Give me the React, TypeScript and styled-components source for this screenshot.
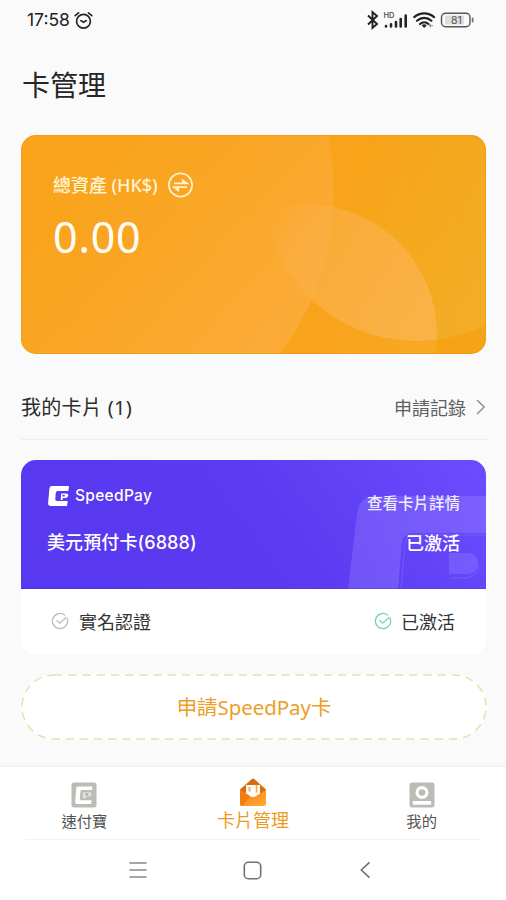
import React from "react";
import styled, { createGlobalStyle } from "styled-components";

const Global = createGlobalStyle`
  *, *::before, *::after { box-sizing: border-box; }
  body { margin: 0; background: #fafafa; }
`;

const cjk = `"Noto Sans CJK TC", sans-serif`;

const Screen = styled.div`
  width: 506px;
  height: 900px;
  display: flex;
  flex-direction: column;
  background: #fafafa;
  color: #2b2b2b;
  font-family: Inter, ${cjk};
  overflow: hidden;
  white-space: nowrap;
`;

const StatusBar = styled.header`
  height: 40px;
  padding: 0 31px 0 27px;
  display: flex;
  align-items: center;
  justify-content: space-between;
`;

const StatusGroup = styled.div<{ $gap: number }>`
  display: flex;
  align-items: center;
  gap: ${(p) => p.$gap}px;
`;

const Clock = styled.time`
  font: 400 17.5px/20px Inter, sans-serif;
  letter-spacing: 0;
  color: #222;
`;

const PageTitle = styled.h1`
  margin: 24px 0 0 22px;
  font: 400 28px/40px ${cjk};
  color: #262626;
`;

const AssetCard = styled.section`
  position: relative;
  margin: 31px 20px 0 21px;
  height: 219px;
  flex: none;
  padding: 37px 32px;
  border-radius: 15px;
  overflow: hidden;
  color: #fffdf5;
`;

const CardArt = styled.svg`
  position: absolute;
  inset: 0;
`;

const AssetHead = styled.div`
  position: relative;
  display: flex;
  align-items: center;
  gap: 9px;
  height: 26px;
`;

const AssetLabel = styled.span`
  font: 500 18px/26px "Noto Sans", ${cjk};
  letter-spacing: -0.05px;
  color: #fff3d4;
`;

const AssetValue = styled.div`
  position: relative;
  margin-top: 12px;
  font: 400 43px/54px "Noto Sans", sans-serif;
  letter-spacing: 0.8px;
`;

const SectionHead = styled.div`
  margin: 22px 18px 0 21px;
  height: 64px;
  flex: none;
  display: flex;
  align-items: center;
  justify-content: space-between;
  border-bottom: 1px solid #eeeeee;
`;

const SectionTitle = styled.h2`
  margin: 0;
  font: 400 20px/30px "Noto Sans", ${cjk};
  letter-spacing: 0.3px;
`;

const RecordsLink = styled.a`
  display: flex;
  align-items: center;
  gap: 9px;
  font: 400 18px/28px ${cjk};
  color: #606060;
  padding-bottom: 1px;
`;

const BankCard = styled.section`
  margin: 20px 20px 0 21px;
  height: 195px;
  flex: none;
  border-radius: 15px;
  overflow: hidden;
  background: #fff;
`;

const CardFace = styled.div`
  position: relative;
  height: 129px;
  padding: 22px 26px 0;
  display: flex;
  justify-content: space-between;
  color: #fff;
`;

const FaceColumn = styled.div<{ $end?: boolean }>`
  position: relative;
  display: flex;
  flex-direction: column;
  align-items: ${(p) => (p.$end ? "flex-end" : "flex-start")};
  padding-top: ${(p) => (p.$end ? 6 : 0)}px;
  gap: ${(p) => (p.$end ? 13 : 20)}px;
`;

const Brand = styled.div`
  height: 28px;
  display: flex;
  align-items: center;
  gap: 5px;
  font: 500 15.5px/28px Inter, sans-serif;
  letter-spacing: 0.3px;
`;

const CardName = styled.div`
  font: 500 18px/26px Inter, ${cjk};
  letter-spacing: 0.1px;
`;

const DetailLink = styled.a`
  font: 500 15.5px/28px ${cjk};
  color: #f0ecff;
`;

const CardState = styled.div`
  font: 500 18px/26px ${cjk};
`;

const CardChecks = styled.div`
  height: 65px;
  padding: 0 31px 0 30px;
  display: flex;
  align-items: center;
  justify-content: space-between;
`;

const Check = styled.div<{ $gap: number }>`
  display: flex;
  align-items: center;
  gap: ${(p) => p.$gap}px;
  font: 400 18px/26px ${cjk};
  color: #333;
  padding-bottom: 1px;
`;

const ApplyButton = styled.button`
  position: relative;
  margin: 19px 19px 0 21px;
  height: 66px;
  flex: none;
  padding: 0 0 1px;
  border: 0;
  border-radius: 33px;
  background: #fff;
  font: 400 20.4px/30px "Noto Sans", ${cjk};
  color: #eb9d27;
`;

const Outline = styled.svg`
  position: absolute;
  inset: 0;
`;

const Footer = styled.footer`
  margin-top: auto;
  height: 135px;
  flex: none;
  background: #fff;
  border-top: 2px solid #f3f3f3;
`;

const Tabs = styled.nav`
  height: 72px;
  display: grid;
  grid-template-columns: repeat(3, 1fr);
`;

const Tab = styled.div<{ $active?: boolean }>`
  display: flex;
  flex-direction: column;
  align-items: center;
  justify-content: flex-end;
  padding-bottom: ${(p) => (p.$active ? 7 : 8)}px;
  gap: ${(p) => (p.$active ? 0 : 1)}px;
  font: 400 ${(p) => (p.$active ? 18 : 15.3)}px/${(p) => (p.$active ? 25 : 22)}px ${cjk};
  color: ${(p) => (p.$active ? "#ee991e" : "#555")};
`;

const SystemNav = styled.div`
  margin: 0 26px;
  height: 61px;
  border-top: 1px solid #f3f3f3;
  padding: 0 108px 0 103px;
  display: grid;
  grid-template-columns: 113.5px 116px auto;
  align-items: center;
`;

const Alarm = () => (
  <svg width="19" height="19" viewBox="0 0 19 19" fill="none" stroke="#262626" strokeWidth="1.7" strokeLinecap="round">
    <circle cx="9.5" cy="10.2" r="6.9" />
    <path d="M1.2 4.6 4.6 1.8M17.8 4.6 14.4 1.8M6.9 9.6l2.6 1.7 2.7-1.7" />
  </svg>
);

const StatusIcons = () => (
  <svg width="110" height="24" viewBox="0 0 110 24" fill="none">
    <path d="m3 7.5 9 8.5-4.5 4V4L12 8l-9 8.5" stroke="#222" strokeWidth="1.9" />
    <text x="18.5" y="10" fontFamily="Inter, sans-serif" fontSize="7.5" fontWeight="600" fill="#555">HD</text>
    <g stroke="#252525" strokeWidth="2.6" strokeLinecap="round">
      <path d="M21 18.4v-.3M26 18.4v-2M31 18.4v-4.3M35.7 18.4V11M40.7 18.4V7.6" />
    </g>
    <g stroke="#222" strokeWidth="2.2" strokeLinecap="round">
      <path d="M49.2 9.1c5.6-5.1 14.3-5.1 19.9 0" />
      <path d="M52 12.7c4.1-3.8 10.3-3.8 14.4 0" />
      <path d="M55 16c2.5-2.2 6-2.2 8.5 0" />
    </g>
    <path d="m56.6 17.2 2.6 2.8 2.6-2.8q-2.6-1.8-5.2 0Z" fill="#222" />
    <path d="M64 17.7h4M65.3 16v3.5" stroke="#888" />
    <rect x="76.5" y="5.2" width="28.5" height="13.5" rx="4" stroke="#555" strokeWidth="1.4" />
    <rect x="80" y="7.4" width="19" height="9" rx="1.5" fill="#dedede" />
    <path d="M107.7 10.5v3" stroke="#777" strokeWidth="1.8" strokeLinecap="round" />
    <text x="91.3" y="15.8" textAnchor="middle" fontFamily="Inter, sans-serif" fontSize="10.5" fill="#555">81</text>
  </svg>
);

const AssetArt = () => (
  <CardArt width="465" height="219" viewBox="21 135 465 219">
    <defs>
      <linearGradient id="base" x1="0" y1="0" x2="1" y2="0">
        <stop offset="0" stopColor="#faa41c" />
        <stop offset=".65" stopColor="#f9a31a" />
        <stop offset="1" stopColor="#f4a414" />
      </linearGradient>
      <linearGradient id="left" gradientUnits="userSpaceOnUse" x1="90" y1="160" x2="270" y2="320">
        <stop offset="0" stopColor="#f9aa38" stopOpacity="0" />
        <stop offset="1" stopColor="#fbad3c" stopOpacity=".8" />
      </linearGradient>
      <linearGradient id="right" gradientUnits="userSpaceOnUse" x1="340" y1="200" x2="480" y2="280">
        <stop offset="0" stopColor="#f1b12a" stopOpacity="0" />
        <stop offset="1" stopColor="#f2ae2a" stopOpacity=".8" />
      </linearGradient>
      <linearGradient id="petal" gradientUnits="userSpaceOnUse" x1="275" y1="215" x2="430" y2="325">
        <stop offset="0" stopColor="#fcb75a" stopOpacity="0" />
        <stop offset=".3" stopColor="#fab045" stopOpacity=".65" />
        <stop offset="1" stopColor="#fab34a" stopOpacity=".9" />
      </linearGradient>
      <linearGradient id="petalEdge" gradientUnits="userSpaceOnUse" x1="300" y1="0" x2="437" y2="0">
        <stop offset="0" stopColor="#fcb13e" stopOpacity="0" />
        <stop offset="1" stopColor="#fcb13e" stopOpacity=".35" />
      </linearGradient>
      <clipPath id="rightCircle"><circle cx="417" cy="186" r="155" /></clipPath>
    </defs>
    <rect x="21" y="135" width="465" height="219" fill="url(#base)" />
    <circle cx="65" cy="192" r="269" fill="url(#left)" />
    <circle cx="417" cy="186" r="155" fill="url(#right)" />
    <circle cx="306" cy="335" r="131" fill="url(#petalEdge)" />
    <g clipPath="url(#rightCircle)"><circle cx="306" cy="335" r="131" fill="url(#petal)" /></g>
    <rect x="21.5" y="135.5" width="464" height="218" rx="14.5" fill="none" stroke="#f09b15" strokeOpacity=".75" />
  </CardArt>
);

const Exchange = () => (
  <svg width="27" height="26" viewBox="0 0 27 26" fill="none" stroke="#fff0ca" strokeWidth="1.8">
    <circle cx="13.5" cy="13" r="11.6" />
    <path d="M7 11.4h13L15 7.6M20 15.2H7l5 3.8" />
    <path d="m15 7 4.6 4.4H15ZM12 19.6l-4.6-4.4H12Z" fill="#fff0ca" stroke="none" />
  </svg>
);

const FaceArt = () => (
  <CardArt width="465" height="129" viewBox="21 460 465 129">
    <defs>
      <linearGradient id="violet" x1="0" y1="0.4" x2="1" y2="0.2">
        <stop offset="0" stopColor="#5838f0" />
        <stop offset=".5" stopColor="#5b3af1" />
        <stop offset="1" stopColor="#6a4bfd" />
      </linearGradient>
      <linearGradient id="mark" x1="0" y1="0" x2="1" y2="0">
        <stop offset="0" stopColor="#8b74fb" stopOpacity=".42" />
        <stop offset="1" stopColor="#8b74ff" stopOpacity=".52" />
      </linearGradient>
    </defs>
    <rect x="21" y="460" width="465" height="129" fill="url(#violet)" />
    <path d="M348 589 357 514q2-18 19-18H486V533H412q-9 0-10 10L398 589Z" fill="url(#mark)" />
    <path d="m401 589 4-46q1-8 9-8h72M451 578h14q13-1 14-14" fill="none" stroke="#8570ff" strokeOpacity=".4" strokeWidth="1.3" />
    <path d="M449 553h18q11 0 11 10 0 11-12 11H449Z" fill="#8270ff" fillOpacity=".5" />
    <path d="M21 588.5H486" stroke="#5133dc" strokeOpacity=".35" />
  </CardArt>
);

const BrandMark = () => (
  <svg width="23" height="22" viewBox="0 0 23 22">
    <path d="M5 1H22L21.4 6H10.8Q9 6 8.8 7.8L8.3 14.2Q8.2 16 10 16H20.7L20 21H4Q.9 21 1.1 18L2.4 3.4Q2.6 1 5 1Z" fill="#fff" />
    <path d="M14.2 8.4H19.4Q21.4 8.4 21.2 10.6 21 13 18.2 13H15.8L15.6 15H13.7Z" fill="#fff" />
    <rect x="15.4" y="9.7" width="2.4" height="1.9" rx=".7" fill="#5838f0" />
  </svg>
);

const Tick = ({ color }: { color: string }) => (
  <svg width="18" height="18" viewBox="0 0 18 18" fill="none" stroke={color} strokeWidth="1.3" strokeLinecap="round">
    <path d="M16.1 6.3A7.6 7.6 0 1 1 13.6 3" />
    <path d="m5.7 8.6 3 2.6 6.4-5.7" />
  </svg>
);

const PayTabIcon = () => (
  <svg width="26" height="26" viewBox="0 0 26 26">
    <rect x=".5" y=".5" width="25" height="25" rx="2.5" fill="#bcbbb5" />
    <path d="M7 4.5H21.4L21 8H11Q9.6 8 9.4 9.5L8.8 16.6Q8.7 18.2 10.2 18.2H20.6L20.2 22H6Q4 22 4.2 20L5.2 6.2Q5.3 4.5 7 4.5Z" fill="#fff" />
    <path d="M12 10.2H19Q20.8 10.2 20.6 12.2 20.4 14.5 18 14.5H15.4L15.2 16.3H11.6Z" fill="#fff" fillOpacity=".55" />
    <rect x="14.4" y="11.4" width="2.8" height="2" fill="#a5a49e" />
  </svg>
);

const CardsTabIcon = () => (
  <svg width="28" height="29" viewBox="0 0 28 29">
    <defs>
      <linearGradient id="fold" x1="0" y1="0" x2="1" y2="1">
        <stop offset="0" stopColor="#f77a0c" />
        <stop offset="1" stopColor="#ffad3a" />
      </linearGradient>
    </defs>
    <path d="M1 11.5 12.8 1q1.2-1 2.4 0L27 11.5V18H1Z" fill="#d96c12" />
    <path d="M7 7h14v12H7Z" fill="#fffdf8" />
    <path d="M9.5 9h2v4.5h-2zM16.8 7h1.6v7.5h-1.6z" fill="#f6ac50" />
    <path d="M1 11.5 11.7 18.4q2.3 1.4 4.6 0L27 11.5V26q0 2-2 2H3q-2 0-2-2Z" fill="url(#fold)" />
    <path d="M1 12v14q0 2 2 2L11 18.2Z" fill="#f47c10" />
  </svg>
);

const MeTabIcon = () => (
  <svg width="26" height="26" viewBox="0 0 26 26">
    <rect x=".5" y=".5" width="25" height="25" rx="2.5" fill="#bcbbb5" />
    <circle cx="13" cy="10.5" r="4.9" fill="none" stroke="#fff" strokeWidth="3.2" />
    <rect x="3.8" y="19" width="18.4" height="3.7" fill="#fff" />
  </svg>
);

export default function App() {
  return (
    <Screen>
      <Global />
      <StatusBar>
        <StatusGroup $gap={4}>
          <Clock>17:58</Clock>
          <Alarm />
        </StatusGroup>
        <StatusIcons />
      </StatusBar>
      <PageTitle>卡管理</PageTitle>
      <AssetCard>
        <AssetArt />
        <AssetHead>
          <AssetLabel>總資產 (HK$)</AssetLabel>
          <Exchange />
        </AssetHead>
        <AssetValue>0.00</AssetValue>
      </AssetCard>
      <SectionHead>
        <SectionTitle>我的卡片 (1)</SectionTitle>
        <RecordsLink>
          申請記錄
          <svg width="13" height="18" viewBox="0 0 13 18" fill="none" stroke="#888" strokeWidth="1.3">
            <path d="m2 2 7.2 7L2 16" />
          </svg>
        </RecordsLink>
      </SectionHead>
      <BankCard>
        <CardFace>
          <FaceArt />
          <FaceColumn>
            <Brand>
              <BrandMark />
              SpeedPay
            </Brand>
            <CardName>美元預付卡(6888)</CardName>
          </FaceColumn>
          <FaceColumn $end>
            <DetailLink>查看卡片詳情</DetailLink>
            <CardState>已激活</CardState>
          </FaceColumn>
        </CardFace>
        <CardChecks>
          <Check $gap={10}>
            <Tick color="#bdbdbd" />
            實名認證
          </Check>
          <Check $gap={9}>
            <Tick color="#79d3ae" />
            已激活
          </Check>
        </CardChecks>
      </BankCard>
      <ApplyButton>
        <Outline width="466" height="66" viewBox="0 0 466 66" fill="none">
          <rect x="1" y="1" width="464" height="64" rx="32" stroke="#e8dfb2" strokeWidth="1.5" strokeDasharray="8.5 5.7" />
        </Outline>
        申請SpeedPay卡
      </ApplyButton>
      <Footer>
        <Tabs>
          <Tab>
            <PayTabIcon />
            速付寶
          </Tab>
          <Tab $active>
            <CardsTabIcon />
            卡片管理
          </Tab>
          <Tab>
            <MeTabIcon />
            我的
          </Tab>
        </Tabs>
        <SystemNav>
          <svg width="18" height="18" viewBox="0 0 18 18" stroke="#888" strokeWidth="1.7">
            <path d="M.5 2h17M.5 9h17M.5 16h17" />
          </svg>
          <svg width="19" height="19" viewBox="0 0 19 19" fill="none" stroke="#707070" strokeWidth="1.6">
            <rect x="1.3" y="1.3" width="16.4" height="16.4" rx="4" />
          </svg>
          <svg width="12" height="18" viewBox="0 0 12 18" fill="none" stroke="#707070" strokeWidth="1.6">
            <path d="M10.5 1.3 2.3 9l8.2 7.7" />
          </svg>
        </SystemNav>
      </Footer>
    </Screen>
  );
}
